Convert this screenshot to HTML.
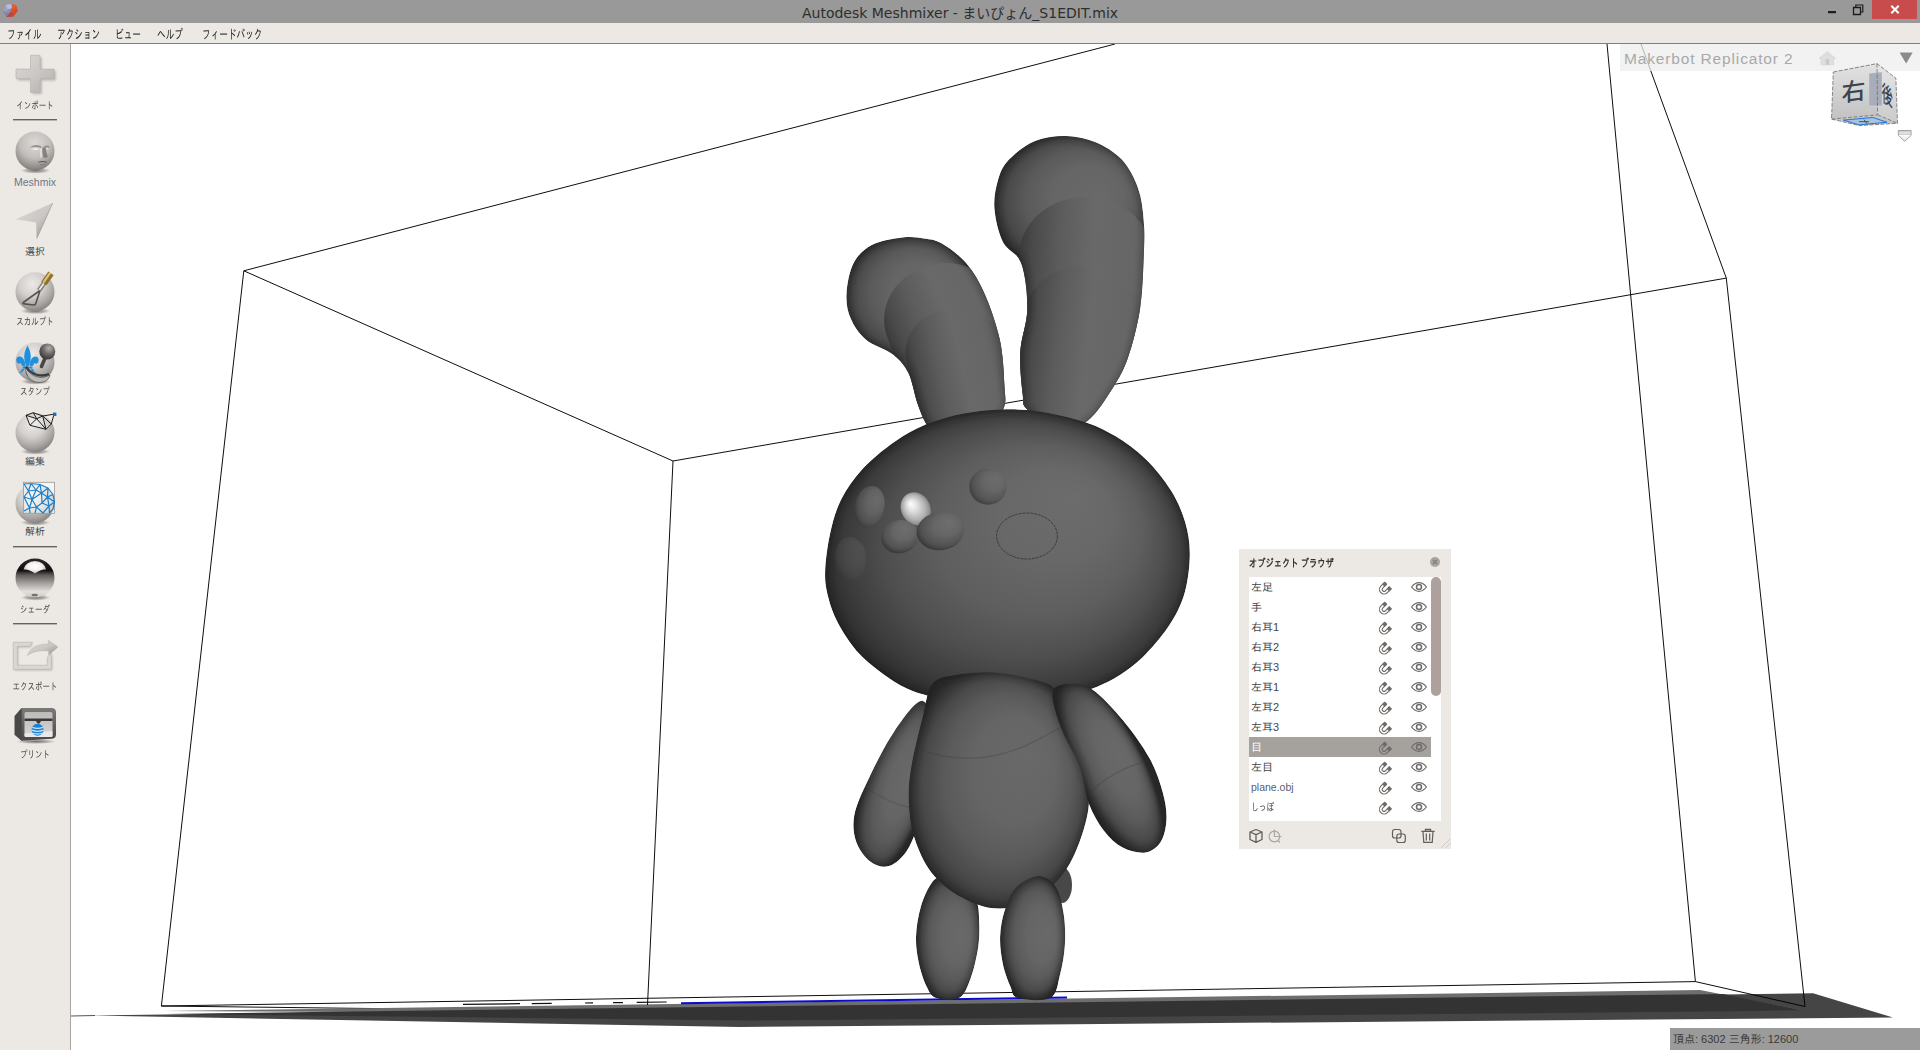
<!DOCTYPE html>
<html lang="ja"><head><meta charset="utf-8"><title>Autodesk Meshmixer</title>
<style>
*{box-sizing:border-box;margin:0;padding:0}
html,body{width:1920px;height:1050px;overflow:hidden;background:#fff;font-family:"Liberation Sans","IPAGothic","Noto Sans CJK JP",sans-serif}
#titlebar{position:absolute;left:0;top:0;width:1920px;height:23px;background:#999999}
#title{position:absolute;left:0;top:1px;width:1920px;height:23px;line-height:24px;text-align:center;font-size:14px;color:#2e2e2e;font-family:"DejaVu Sans","Liberation Sans","Noto Sans CJK JP",sans-serif;letter-spacing:0px}
#menubar{position:absolute;left:0;top:23px;width:1920px;height:21px;background:#ece8e4;border-bottom:1px solid #7f7f7f}
.mi{position:absolute;top:5px;font-size:13px;line-height:14px;color:#222;white-space:nowrap;transform-origin:0 0;transform:scaleX(.665);font-family:"Liberation Sans","IPAGothic","Noto Sans CJK JP",sans-serif}
#sidebar{position:absolute;left:0;top:44px;width:71px;height:1006px;background:#ece8e4;border-right:1px solid #a8a5a2}
.sl{position:absolute;left:0;width:70px;text-align:center;font-size:10px;line-height:12px;color:#444;white-space:nowrap;font-family:"Liberation Sans","IPAGothic","Noto Sans CJK JP",sans-serif}
.sl span{display:inline-block;transform:scaleX(.75);transform-origin:50% 50%}
.sl span.k{transform:none}
.sl.en{font-family:"Liberation Sans",sans-serif;font-size:10.5px;color:#6d7784}
.sep{position:absolute;left:13px;width:44px;height:1px;background:#65625f;box-shadow:0 1px 0 rgba(101,98,95,.4)}
#scene{position:absolute;left:0;top:0;width:1920px;height:1050px}
#status{position:absolute;left:1670px;top:1028px;width:250px;height:22px;background:#9b9b9b;color:#3a3a3a;font-size:11px;line-height:22px;padding-left:3px;font-family:"Liberation Sans","IPAGothic",sans-serif}
#printer{position:absolute;left:1620px;top:44px;width:300px;height:27px;background:rgba(238,238,238,.75)}
#printer span{position:absolute;left:4px;top:5px;font-size:15.5px;line-height:20px;color:#a9a9a9;letter-spacing:.85px;white-space:nowrap}
#ob{position:absolute;left:1239px;top:549px;width:212px;height:300px;background:#ece8e4}
#ob h4{position:absolute;left:10px;top:7px;font-size:11px;line-height:14px;font-weight:bold;color:#333;white-space:nowrap;transform:scaleX(.75);transform-origin:0 0;font-family:"Liberation Sans","IPAGothic","Noto Sans CJK JP",sans-serif}
#list{position:absolute;left:10px;top:28px;width:192px;height:244px;background:#fff}
.row{position:absolute;left:0;width:182px;height:20px;font-size:11px;line-height:20px;color:#444;padding-left:2px;white-space:nowrap;font-family:"Liberation Sans","IPAGothic","Noto Sans CJK JP",sans-serif}
.row.sel{background:#a5a19d;color:#fff}
.row.en{font-family:"Liberation Sans",sans-serif;font-size:10.5px;color:#596070}
#sb{position:absolute;left:192px;top:28px;width:10px;height:119px;background:#ada09d;border-radius:5px}
.rim{fill:none;stroke:#151515;stroke-width:6;filter:url(#b3);opacity:.4}
.shadow{fill:none;stroke:#2a2a2a;stroke-width:6;filter:url(#b3);opacity:.5}
.seam{fill:none;stroke:#3c3c3c;stroke-width:1.5;opacity:.28}
</style></head><body>
<div id="titlebar"></div>
<div id="title">Autodesk Meshmixer - まいぴょん_S1EDIT.mix</div>
<svg id="wctl" width="100" height="23" viewBox="1820 0 100 23" style="position:absolute;left:1820px;top:0">
<rect x="1872" y="0" width="45" height="19" fill="#c94c4c"/>
<path d="M1891.300 5.800l7.400 7.400M1898.700 5.800l-7.400 7.400" stroke="#fff" stroke-width="2"/>
<rect x="1828" y="11" width="8" height="2.200" fill="#1c1c1c"/>
<path d="M1853.500 7.500h7v7h-7z" fill="none" stroke="#1c1c1c" stroke-width="1.300"/>
<path d="M1855.800 7.500v-2.500h7v7h-2.300" fill="none" stroke="#1c1c1c" stroke-width="1.200"/>
</svg>
<svg width="22" height="22" viewBox="0 0 22 22" style="position:absolute;left:0;top:0">
<path d="M11 3.800L16.500 6L17.800 10.500L13.500 16.600L6.500 16.900L2.800 10.500L5.500 5Z" fill="#8a90b4"/>
<path d="M11 3.800L5.500 5L7.500 9.500L12 8Z" fill="#b9bdd6"/><path d="M5.500 5L2.800 10.500L7 12.500L7.500 9.500Z" fill="#9aa0c2"/><path d="M2.800 10.500L6.500 16.900L9.500 13.500L7 12.500Z" fill="#7f84a6"/>
<path d="M12.800 3.900L16.500 6L17.800 10.500L13.500 16.600L6.500 16.900L10.500 12L12 8Z" fill="#d9532f"/>
<path d="M12.800 3.900L16.500 6L14.500 9.500L12 8Z" fill="#ee5a25"/><path d="M6.500 16.900L13.500 16.600L12.500 12.500L10.500 12Z" fill="#b64a3f"/><path d="M17.800 10.500L13.500 16.600L12.500 12.500L14.500 9.500Z" fill="#cf4c30"/>
</svg>
<div id="menubar">
<div class="mi" style="left:7px">ファイル</div>
<div class="mi" style="left:57px">アクション</div>
<div class="mi" style="left:115px">ビュー</div>
<div class="mi" style="left:157px">ヘルプ</div>
<div class="mi" style="left:202px">フィードバック</div>
</div>
<div id="sidebar">
<svg width="70" height="1006" viewBox="0 44 70 1006" style="position:absolute;left:0;top:0">
<defs>
<linearGradient id="gPlus" x1="0" y1="0" x2="1" y2="1"><stop offset="0" stop-color="#d9d7d4"/><stop offset=".5" stop-color="#cbc8c5"/><stop offset="1" stop-color="#b0adaa"/></linearGradient>
<radialGradient id="gSph" cx=".42" cy=".3" r=".72"><stop offset="0" stop-color="#eceae8"/><stop offset=".45" stop-color="#d2cfcc"/><stop offset=".8" stop-color="#a6a3a0"/><stop offset="1" stop-color="#84817e"/></radialGradient>
<radialGradient id="gFace" cx=".5" cy=".3" r=".75"><stop offset="0" stop-color="#dcdad8"/><stop offset=".5" stop-color="#c2bfbc"/><stop offset=".85" stop-color="#8d8a87"/><stop offset="1" stop-color="#6f6c69"/></radialGradient>
<radialGradient id="gShd" cx=".5" cy=".5" r=".5"><stop offset="0" stop-color="#4a4744" stop-opacity=".75"/><stop offset=".6" stop-color="#6a6764" stop-opacity=".45"/><stop offset="1" stop-color="#8a8784" stop-opacity="0"/></radialGradient>
<linearGradient id="gArrow" x1="0" y1="0" x2="1" y2="1"><stop offset="0" stop-color="#dddbd8"/><stop offset=".55" stop-color="#c9c6c3"/><stop offset="1" stop-color="#8f8c89"/></linearGradient>
<linearGradient id="gChrome" x1="0" y1="0" x2="0" y2="1"><stop offset="0" stop-color="#2a2827"/><stop offset=".3" stop-color="#0e0d0d"/><stop offset=".42" stop-color="#5d5a58"/><stop offset=".62" stop-color="#a09c9a"/><stop offset=".85" stop-color="#e4dfdd"/><stop offset="1" stop-color="#cfcac8"/></linearGradient>
<radialGradient id="gChromeHi" cx=".5" cy=".45" r=".55"><stop offset="0" stop-color="#fff"/><stop offset=".6" stop-color="#f4eeee"/><stop offset="1" stop-color="#b5aeae"/></radialGradient>
<radialGradient id="gBall" cx=".6" cy=".3" r=".7"><stop offset="0" stop-color="#b5b3b1"/><stop offset=".5" stop-color="#6e6c6a"/><stop offset="1" stop-color="#3c3a39"/></radialGradient>
<linearGradient id="gPrn" x1="0" y1="0" x2="0" y2="1"><stop offset="0" stop-color="#7b7977"/><stop offset="1" stop-color="#4b4948"/></linearGradient>
<linearGradient id="gPrnIn" x1="0" y1="0" x2="0" y2="1"><stop offset="0" stop-color="#bdbbb9"/><stop offset="1" stop-color="#d9d7d5"/></linearGradient>
<filter id="sb1" x="-20%" y="-20%" width="150%" height="150%"><feGaussianBlur stdDeviation="1"/></filter>
</defs>
<!-- import plus -->
<path d="M31.5 56.5h9.5v13.5h14v9.6h-14v13.5h-9.5v-13.5h-14.5v-9.6h14.5z" fill="#8f8c89" opacity=".55" filter="url(#sb1)" transform="translate(.8 1)"/>
<path d="M30.5 55.3h9.5v13.8h14.2v9.6h-14.2v13.7h-9.5v-13.7h-14.5v-9.6h14.500z" fill="url(#gPlus)" stroke="#b7b4b1" stroke-width=".7"/>
<!-- meshmix -->
<ellipse cx="35.5" cy="170.5" rx="15" ry="3.2" fill="url(#gShd)"/>
<circle cx="35" cy="151" r="19.5" fill="url(#gFace)"/>
<path d="M29.500 147.500q5.500-4.500 11.500-1.200l.8 1.800q-6-2-12.300-.6z" fill="#7d7a77" opacity=".75"/>
<path d="M44.200 146.300q2.800-1.600 5.300.2l-.3 1.300q-2.500-1-5 0z" fill="#7d7a77" opacity=".75"/>
<path d="M31.500 149q4.500-1.800 8.500-.3q-4 2.300-8.500.3zM45 148.700q2-1 4 0q-2 1.500-4 0z" fill="#eeecea"/>
<path d="M42.300 147.500q-.3 5 1 9.800q2.300 1.300 4.500-.6q-1.800-4.500-2-9.200z" fill="#6a6764" opacity=".7"/>
<path d="M41.300 148q-.8 5.500-.3 9.500" stroke="#f0eeec" stroke-width="1.300" fill="none" opacity=".9"/>
<path d="M38.500 162.200q4-1.300 8.200.1" stroke="#5e5b58" stroke-width="1.100" fill="none"/>
<path d="M40 164.500q2.600 1 5.400.1" stroke="#7d7a77" stroke-width="1" fill="none"/>
<!-- select arrow -->
<path d="M52.700 203L15.700 219.300L36 222.500L36.700 238.700Z" fill="url(#gArrow)"/>
<path d="M52.700 203L36.700 238.700" stroke="#8a8784" stroke-width=".8" opacity=".7"/>
<!-- sculpt -->
<ellipse cx="35.500" cy="311" rx="15" ry="3.200" fill="url(#gShd)"/>
<circle cx="35" cy="291.700" r="19.500" fill="url(#gSph)"/>
<path d="M40 290.500L23.200 302.500q-.8 1.200 1 1.400L33.500 305q1.800 0 2.200-1.300z" fill="none" stroke="#55524f" stroke-width="1.600" stroke-linejoin="round"/>
<path d="M39 290.300L44.500 282.500" stroke="#7d7a77" stroke-width="4.600"/>
<path d="M39.300 289.800L44.500 282.500" stroke="#ecebea" stroke-width="1.800"/>
<path d="M43.800 283.500L51 273.300" stroke="#8f7226" stroke-width="6.500"/>
<path d="M43.300 282.600L50.300 272.600" stroke="#d9c27e" stroke-width="2.200"/>
<!-- stamp -->
<ellipse cx="35.500" cy="381.500" rx="15" ry="3.200" fill="url(#gShd)"/>
<circle cx="35" cy="362" r="19.500" fill="url(#gSph)"/>
<g fill="#1f8fe0"><path d="M27.500 345.500C30 350 31.500 355 30.500 360C30 363 29 365 28.500 366.500L26.500 366.500C26 365 25 363 24.500 360C23.500 355 25 350 27.500 345.500Z"/>
<path d="M25.500 366.500C25.500 361 23 356.500 19.500 356.500C16.500 356.500 15.500 360 17 362.500C18 364 20 364 20.800 362.800C21 365 22.500 366.500 24 366.500Z"/>
<path d="M29.500 366.500C29.500 361 32 356.500 35.500 356.500C38.500 356.500 39.500 360 38 362.500C37 364 35 364 34.200 362.800C34 365 32.500 366.500 31 366.500Z"/>
<rect x="22.500" y="366.800" width="10" height="1.800"/>
<path d="M27.500 369l2 5l-2 1.800l-2-1.800zM24.300 369c-1 3-3 4.500-5.800 4c1.800-.5 2.800-2 3.300-4zM30.700 369c1 3 3 4.500 5.800 4c-1.800-.5-2.800-2-3.300-4z"/></g>
<path d="M25 367c6 10 16 13 25 8c-1 4.500-5 7.500-11 7.500c-7 0-13-5-14-15.500z" fill="#bdbbb9" stroke="#5a5856" stroke-width=".8"/>
<path d="M26 366.500c5 8 14 11 23 7.500" fill="none" stroke="#3d3b3a" stroke-width="2.200"/>
<path d="M45.500 357L41.500 366.500" stroke="#4a4847" stroke-width="3.600" stroke-linecap="round"/>
<circle cx="47.300" cy="351.500" r="8" fill="url(#gBall)"/>
<!-- edit -->
<ellipse cx="35.500" cy="451.500" rx="15" ry="3.200" fill="url(#gShd)"/>
<circle cx="35" cy="432.500" r="19.500" fill="url(#gSph)"/>
<path d="M26 415.300L33.300 412.700L42.700 416L54 414.200L51.300 424L46 429.300L30 425.300ZM26 415.300L36.700 418.700L33.300 412.700M36.700 418.700L42.700 416L51.300 424M36.700 418.700L30 425.300M36.700 418.700L46 429.300M42.700 416L46 429.300" fill="rgba(255,255,255,.25)" stroke="#1d1c1b" stroke-width="1" stroke-linejoin="round"/>
<rect x="53" y="412.600" width="3.400" height="3.400" fill="#1473c8"/>
<!-- analysis -->
<ellipse cx="35.500" cy="522.500" rx="15" ry="3.200" fill="url(#gShd)"/>
<circle cx="35" cy="503.500" r="19.500" fill="url(#gSph)"/>
<rect x="23.500" y="482.300" width="31" height="31" fill="rgba(255,255,255,.55)" stroke="#9a9794" stroke-width=".8"/>
<path d="M24 484L31 483.500L40 484.500L48 488L53 494.500L54.500 502L53 509L49.500 513M24 484L28.500 491L31 483.500L36 490L40 484.500L41.500 493L48 488L47.500 497L53 494.500M24 497L28.500 491L36 490L41.500 493L47.500 497L54.500 502M24 497L32 499.500L28.500 491M32 499.500L36 490M32 499.500L41.500 493L42 503L47.500 497L49 506L54.500 502M24 511L29.500 508L32 499.500L36.500 507L42 503L49 506L49.500 513M24 497L29.500 508L36.500 507L43 513L49 506M36.500 507L35 513M29.500 508L30 513" fill="none" stroke="#1b7fca" stroke-width="1.200" stroke-linejoin="round"/>
<!-- shader -->
<ellipse cx="35.500" cy="597.500" rx="15" ry="3.200" fill="url(#gShd)"/>
<circle cx="35" cy="578" r="19.500" fill="url(#gChrome)"/>
<path d="M23.500 569.500q2-8 11.500-8.500q9.500.5 11 8.500q-5-.5-11 4q-6-4.500-11.500-4z" fill="url(#gChromeHi)"/>
<ellipse cx="34.700" cy="595" rx="3.200" ry="1.300" fill="#5c5856" opacity=".8"/>
<!-- export -->
<g transform="translate(.8 1)" opacity=".5" filter="url(#sb1)"><path d="M13.300 642.300h19l-3 4h-12v19h30v-8l4-4v16h-38z" fill="#7c7976"/></g>
<path d="M13.300 642.300h19l-3 4h-12v19h30v-8l4-4v16h-38z" fill="#d9d7d4" stroke="#bcb9b6" stroke-width=".6"/>
<path d="M27.300 655.500c3-8 10-11.500 21-11.500v-3.700l9.700 6.700l-9.300 8.300v-4.300c-9-1-16 .5-21.400 4.500z" fill="url(#gArrow)" stroke="#b5b2af" stroke-width=".5"/>
<!-- print -->
<ellipse cx="36" cy="741.500" rx="20" ry="2.500" fill="url(#gShd)"/>
<path d="M14.700 716l7-8h30.500q3.800.3 3.800 4.500v22q0 4-3.800 4.200l-30.500 2l-7-6z" fill="url(#gPrn)"/>
<path d="M14.700 716l7-8v32.700l-7-6z" fill="#4a4847"/>
<rect x="24.500" y="712" width="28" height="25" rx="1.500" fill="url(#gPrnIn)"/>
<rect x="24.500" y="718.500" width="28" height="2.500" fill="#3a3938"/>
<path d="M36 721h5l-1.500 2.500h-2z" fill="#3a3938"/>
<path d="M24.500 733.500l28-2.500v4.500q0 1.500-1.500 1.500h-25q-1.500 0-1.500-1.500z" fill="#f0eeec" opacity=".8"/>
<circle cx="37.600" cy="729.800" r="6" fill="#1b7fd2"/>
<path d="M32.300 727.300q5.300 2.200 10.600 0M31.700 730.200q6 2.300 11.800 0M32.600 733q5 2 10 0" fill="none" stroke="#bfe2fa" stroke-width="1.300"/>
</svg>
<div class="sep" style="top:75px"></div>
<div class="sep" style="top:502px"></div>
<div class="sep" style="top:579px"></div>
<div class="sl" style="top:56px"><span>インポート</span></div>
<div class="sl en" style="top:132px">Meshmix</div>
<div class="sl" style="top:202px"><span class="k">選択</span></div>
<div class="sl" style="top:272px"><span>スカルプト</span></div>
<div class="sl" style="top:342px"><span>スタンプ</span></div>
<div class="sl" style="top:412px"><span class="k">編集</span></div>
<div class="sl" style="top:482px"><span class="k">解析</span></div>
<div class="sl" style="top:560px"><span>シェーダ</span></div>
<div class="sl" style="top:637px"><span>エクスポート</span></div>
<div class="sl" style="top:705px"><span>プリント</span></div>
</div>
<svg id="scene" viewBox="0 0 1920 1050">
<defs>
<clipPath id="vp"><rect x="71" y="44" width="1849" height="1006"/></clipPath>
<filter id="b5" x="-20%" y="-20%" width="140%" height="140%"><feGaussianBlur stdDeviation="6.5"/></filter>
<filter id="b10" x="-20%" y="-20%" width="140%" height="140%"><feGaussianBlur stdDeviation="11"/></filter>
<filter id="b4" x="-20%" y="-20%" width="140%" height="140%"><feGaussianBlur stdDeviation="5"/></filter>
<filter id="b3" x="-20%" y="-20%" width="140%" height="140%"><feGaussianBlur stdDeviation="3"/></filter>
<path id="pEarR" d="M1065.4 135.9C1075.4 136.1 1085.6 138.1 1095.0 142.0C1104.4 145.9 1114.6 151.9 1121.8 159.6C1129.0 167.3 1134.3 177.8 1138.0 188.0C1141.7 198.2 1142.8 209.1 1143.7 220.6C1144.7 232.1 1144.3 242.5 1143.7 257.2C1143.1 271.9 1142.6 292.2 1140.0 309.0C1137.4 325.8 1132.5 344.6 1127.9 357.8C1123.3 371.0 1119.2 377.8 1112.6 388.2C1106.0 398.6 1097.0 412.9 1088.2 420.2C1079.4 427.5 1070.2 433.8 1060.0 432.0C1049.8 430.2 1033.5 415.9 1027.3 409.6C1021.1 403.3 1023.9 404.0 1022.7 394.3C1021.5 384.6 1019.5 365.9 1020.3 351.7C1021.1 337.5 1027.1 323.7 1027.3 309.0C1027.5 294.3 1025.3 274.5 1021.2 263.3C1017.1 252.1 1007.4 251.1 1002.9 241.9C998.4 232.8 995.2 218.7 994.4 208.4C993.6 198.1 995.6 188.1 998.0 180.0C1000.4 171.9 1002.8 166.1 1009.0 159.6C1015.2 153.1 1025.6 144.9 1035.0 141.0C1044.4 137.1 1055.4 135.7 1065.4 135.9Z"/><path id="pEarL" d="M902.3 237.4C911.0 236.3 917.4 237.5 924.0 238.5C930.6 239.5 934.9 239.4 941.9 243.5C948.9 247.6 959.2 254.9 966.3 263.3C973.4 271.7 979.0 281.0 984.6 293.7C990.2 306.4 996.5 324.2 999.8 339.5C1003.1 354.8 1003.9 373.4 1004.4 385.2C1004.9 396.9 1007.0 400.9 1002.9 410.0C998.8 419.1 990.5 435.0 980.0 440.0C969.5 445.0 948.9 442.5 940.0 440.0C931.1 437.5 930.5 430.9 926.7 424.8C923.0 418.7 920.5 412.1 917.5 403.5C914.5 394.9 912.4 381.1 908.4 373.0C904.4 364.9 900.3 360.3 893.2 354.7C886.1 349.1 872.8 345.6 865.7 339.5C858.6 333.4 853.7 325.7 850.5 318.1C847.3 310.5 846.0 302.8 846.5 293.7C847.0 284.6 849.3 271.4 853.5 263.3C857.7 255.2 863.7 249.3 871.8 245.0C879.9 240.7 893.6 238.5 902.3 237.4Z"/><path id="pHead" d="M825.1 572.3C825.4 561.8 827.3 546.6 829.9 534.6C832.5 522.6 835.4 511.0 840.9 500.0C846.4 489.0 854.0 478.3 862.9 468.6C871.8 458.9 883.8 449.2 894.3 441.9C904.8 434.6 914.2 429.3 925.7 424.6C937.2 419.9 950.9 416.1 963.5 413.6C976.1 411.1 988.6 409.9 1001.2 409.5C1013.8 409.1 1025.3 409.4 1038.9 411.4C1052.5 413.4 1070.3 417.4 1082.9 421.4C1095.5 425.4 1103.9 429.3 1114.4 435.6C1124.9 441.9 1136.4 450.0 1145.8 459.2C1155.2 468.4 1164.5 480.1 1171.0 490.6C1177.5 501.1 1182.0 511.5 1185.1 522.0C1188.2 532.5 1189.8 542.0 1189.8 553.5C1189.8 565.0 1188.2 579.7 1185.1 591.2C1182.0 602.7 1177.5 612.1 1171.0 622.6C1164.5 633.1 1154.2 645.5 1145.8 654.1C1137.4 662.8 1129.6 668.8 1120.7 674.5C1111.8 680.2 1104.2 684.0 1092.4 688.6C1080.6 693.2 1064.6 698.8 1050.0 702.0C1035.4 705.2 1019.2 707.5 1005.0 708.0C990.8 708.5 977.4 706.9 965.0 705.0C952.6 703.1 940.2 699.2 930.5 696.5C920.8 693.8 915.0 692.5 906.9 688.6C898.8 684.7 890.1 679.2 881.7 672.9C873.3 666.6 863.9 659.3 856.6 650.9C849.3 642.5 842.4 631.5 837.7 622.6C833.0 613.7 830.4 605.9 828.3 597.5C826.2 589.1 824.8 582.8 825.1 572.3Z"/><path id="pBody" d="M932.3 683.8C937.7 676.9 945.0 676.9 955.2 675.0C965.4 673.1 981.2 671.9 993.3 672.4C1005.3 672.9 1017.5 675.6 1027.5 678.1C1037.5 680.6 1048.6 682.5 1053.4 687.6C1058.2 692.7 1054.1 700.6 1056.1 708.5C1058.1 716.4 1061.5 725.7 1065.6 735.2C1069.7 744.7 1077.0 756.2 1080.8 765.7C1084.6 775.2 1087.5 783.4 1088.5 792.3C1089.5 801.2 1089.0 808.2 1086.5 819.0C1084.0 829.8 1078.6 846.3 1073.2 857.1C1067.8 867.9 1062.5 876.1 1054.2 883.7C1046.0 891.3 1032.6 898.7 1023.7 902.8C1014.8 906.9 1008.5 908.2 1000.9 908.5C993.3 908.8 986.2 907.6 978.0 904.7C969.8 901.8 959.6 897.3 951.4 891.3C943.1 885.3 934.9 878.0 928.5 868.5C922.1 859.0 916.6 845.6 913.3 834.2C910.0 822.8 909.0 811.3 908.7 799.9C908.4 788.5 909.0 779.7 911.4 765.7C913.8 751.8 919.3 729.9 922.8 716.2C926.3 702.6 926.9 690.7 932.3 683.8Z"/>
<path id="pArmL" d="M922.8 700.9C916.0 699.5 903.4 718.1 894.2 731.4C885.0 744.7 874.2 766.9 867.6 780.9C861.0 794.9 856.2 805.1 854.3 815.2C852.4 825.4 853.7 834.2 856.2 841.8C858.7 849.4 864.4 856.8 869.5 860.9C874.6 865.0 881.2 867.2 886.6 866.6C892.0 866.0 897.5 861.9 901.9 857.1C906.3 852.3 909.4 847.5 913.3 838.0C917.1 828.5 921.4 816.3 925.0 800.0C928.6 783.7 935.4 756.5 935.0 740.0C934.6 723.5 929.6 702.3 922.8 700.9Z"/><path id="pArmR" d="M1053.5 689.5C1056.0 685.4 1062.9 683.8 1069.4 683.8C1075.9 683.8 1083.4 683.5 1092.3 689.5C1101.2 695.5 1113.2 708.6 1122.7 720.0C1132.2 731.4 1142.7 746.0 1149.4 758.0C1156.1 770.0 1159.9 782.1 1162.7 792.3C1165.5 802.5 1166.8 810.8 1166.5 819.0C1166.2 827.2 1164.3 836.2 1160.8 841.8C1157.3 847.4 1151.9 851.5 1145.6 852.5C1139.2 853.5 1129.7 851.2 1122.7 847.5C1115.7 843.8 1109.3 837.7 1103.7 830.4C1098.1 823.1 1093.0 814.6 1088.9 803.8C1084.8 793.0 1083.4 777.1 1079.3 765.7C1075.2 754.3 1068.2 744.7 1064.1 735.2C1060.0 725.7 1056.4 716.1 1054.6 708.5C1052.8 700.9 1051.0 693.6 1053.5 689.5Z"/><path id="pLegL" d="M945.0 876.0C940.0 876.3 936.3 876.9 932.3 882.0C928.3 887.1 923.6 897.4 920.9 906.6C918.2 915.8 916.3 927.5 916.0 937.0C915.7 946.5 917.2 955.5 919.0 963.7C920.8 972.0 923.8 980.8 926.6 986.5C929.5 992.2 930.7 996.1 936.1 998.0C941.5 999.9 953.3 1001.2 959.0 998.0C964.7 994.8 967.2 987.1 970.4 978.9C973.6 970.6 976.5 958.0 978.0 948.5C979.5 939.0 979.5 929.9 979.2 921.8C978.9 913.7 979.0 907.0 976.1 900.0C973.2 893.0 967.2 884.0 962.0 880.0C956.8 876.0 950.0 875.7 945.0 876.0Z"/><path id="pLegR" d="M1039.0 876.1C1032.3 876.1 1021.8 881.8 1016.1 887.5C1010.4 893.2 1007.4 902.1 1004.7 910.4C1002.0 918.6 1000.4 928.1 1000.1 937.0C999.8 945.9 1001.1 955.5 1002.8 963.7C1004.5 972.0 1007.9 980.8 1010.4 986.5C1012.9 992.2 1011.3 996.1 1018.0 998.0C1024.7 999.9 1043.4 1001.8 1050.4 998.0C1057.4 994.2 1057.5 984.0 1059.9 975.1C1062.3 966.2 1064.3 954.9 1064.9 944.7C1065.5 934.6 1065.2 923.7 1063.7 914.2C1062.2 904.7 1060.2 893.9 1056.1 887.5C1052.0 881.1 1045.7 876.1 1039.0 876.1Z"/>
<clipPath id="cEarR"><use href="#pEarR"/></clipPath><clipPath id="cEarL"><use href="#pEarL"/></clipPath><clipPath id="cHead"><use href="#pHead"/></clipPath><clipPath id="cBody"><use href="#pBody"/></clipPath>
<clipPath id="cArmL"><use href="#pArmL"/></clipPath><clipPath id="cArmR"><use href="#pArmR"/></clipPath><clipPath id="cLegL"><use href="#pLegL"/></clipPath><clipPath id="cLegR"><use href="#pLegR"/></clipPath>
<radialGradient id="lHead" gradientUnits="userSpaceOnUse" gradientTransform="translate(1007 559) rotate(0) scale(183 150)" cx="0" cy="0" r="1.03" fx="0.38" fy="-0.42"><stop offset="0" stop-color="#6c6c6c"/><stop offset=".3" stop-color="#686868"/><stop offset=".55" stop-color="#5e5e5e"/><stop offset=".75" stop-color="#4e4e4e"/><stop offset=".9" stop-color="#3b3b3b"/><stop offset="1" stop-color="#282828"/></radialGradient>
<radialGradient id="lBody" gradientUnits="userSpaceOnUse" gradientTransform="translate(998 790) rotate(0) scale(91 119)" cx="0" cy="0" r="1.08" fx="0.32" fy="-0.3"><stop offset="0" stop-color="#696969"/><stop offset=".42" stop-color="#656565"/><stop offset=".65" stop-color="#5a5a5a"/><stop offset=".82" stop-color="#494949"/><stop offset=".95" stop-color="#303030"/><stop offset="1" stop-color="#2a2a2a"/></radialGradient>
<radialGradient id="lEarR" gradientUnits="userSpaceOnUse" gradientTransform="translate(1072 203) rotate(0) scale(80 70)" cx="0" cy="0" r="1.08" fx="0.35" fy="-0.15"><stop offset="0" stop-color="#696969"/><stop offset=".42" stop-color="#656565"/><stop offset=".65" stop-color="#5a5a5a"/><stop offset=".82" stop-color="#494949"/><stop offset=".95" stop-color="#303030"/><stop offset="1" stop-color="#2a2a2a"/></radialGradient>
<radialGradient id="lEarL" gradientUnits="userSpaceOnUse" gradientTransform="translate(908 297) rotate(0) scale(66 62)" cx="0" cy="0" r="1.08" fx="0.35" fy="-0.2"><stop offset="0" stop-color="#696969"/><stop offset=".42" stop-color="#656565"/><stop offset=".65" stop-color="#5a5a5a"/><stop offset=".82" stop-color="#494949"/><stop offset=".95" stop-color="#303030"/><stop offset="1" stop-color="#2a2a2a"/></radialGradient>
<radialGradient id="lArmL" gradientUnits="userSpaceOnUse" gradientTransform="translate(896 783) rotate(17) scale(31 90)" cx="0" cy="0" r="1.08" fx="0.4" fy="-0.1"><stop offset="0" stop-color="#696969"/><stop offset=".42" stop-color="#656565"/><stop offset=".65" stop-color="#5a5a5a"/><stop offset=".82" stop-color="#494949"/><stop offset=".95" stop-color="#303030"/><stop offset="1" stop-color="#2a2a2a"/></radialGradient>
<radialGradient id="lArmR" gradientUnits="userSpaceOnUse" gradientTransform="translate(1110 768) rotate(-26) scale(32 93)" cx="0" cy="0" r="1.08" fx="0.5" fy="-0.1"><stop offset="0" stop-color="#696969"/><stop offset=".42" stop-color="#656565"/><stop offset=".65" stop-color="#5a5a5a"/><stop offset=".82" stop-color="#494949"/><stop offset=".95" stop-color="#303030"/><stop offset="1" stop-color="#2a2a2a"/></radialGradient>
<radialGradient id="lLegL" gradientUnits="userSpaceOnUse" gradientTransform="translate(948 938) rotate(0) scale(32.5 62)" cx="0" cy="0" r="1.08" fx="0.45" fy="-0.05"><stop offset="0" stop-color="#696969"/><stop offset=".42" stop-color="#656565"/><stop offset=".65" stop-color="#5a5a5a"/><stop offset=".82" stop-color="#494949"/><stop offset=".95" stop-color="#303030"/><stop offset="1" stop-color="#2a2a2a"/></radialGradient>
<radialGradient id="lLegR" gradientUnits="userSpaceOnUse" gradientTransform="translate(1033 937) rotate(0) scale(33 62)" cx="0" cy="0" r="1.08" fx="0.45" fy="-0.05"><stop offset="0" stop-color="#696969"/><stop offset=".42" stop-color="#656565"/><stop offset=".65" stop-color="#5a5a5a"/><stop offset=".82" stop-color="#494949"/><stop offset=".95" stop-color="#303030"/><stop offset="1" stop-color="#2a2a2a"/></radialGradient>
<linearGradient id="gSeg" x1="0" y1="0" x2="1" y2="0"><stop offset="0" stop-color="#3a3a3a"/><stop offset=".1" stop-color="#4a4a4a"/><stop offset=".3" stop-color="#5c5c5c"/><stop offset=".55" stop-color="#696969"/><stop offset=".85" stop-color="#666"/><stop offset="1" stop-color="#5c5c5c"/></linearGradient>
<radialGradient id="gSpot" cx=".58" cy=".42" r=".62" fx=".72" fy=".28"><stop offset="0" stop-color="#6e6e6e"/><stop offset=".45" stop-color="#666"/><stop offset=".8" stop-color="#525252"/><stop offset="1" stop-color="#363636"/></radialGradient>
<radialGradient id="gEye" cx=".5" cy=".5" r=".55" fx=".42" fy=".3"><stop offset="0" stop-color="#ffffff"/><stop offset=".3" stop-color="#e2e2e2"/><stop offset=".7" stop-color="#b0b0b0"/><stop offset="1" stop-color="#787878"/></radialGradient>
</defs>
<g clip-path="url(#vp)">
<line x1="161.4" y1="1006" x2="647.2" y2="1011.8" stroke="#000" stroke-width=".95"/>
<!-- floor -->
<polygon points="90,1015.5 740,1027 1893,1017.5 1813,993.3" fill="#454545"/>
<polygon points="163,1011 1700,990 1803,1010.3 750,1014" fill="#6e6e6e"/>
<polygon points="166,1014 750,1020.5 1803,1010.5 1723,994" fill="#333333"/>
<line x1="71" y1="1016" x2="95" y2="1015.5" stroke="#555" stroke-width="1"/>
<!-- box wireframe -->
<g stroke="#000" stroke-width=".95" fill="none">
<path d="M243.8 270.8L1115 44M243.8 270.8L673 461L1726.3 278.1L1641 44M243.8 270.8L161.4 1006L1695.4 981.6L1805 1006.5L1726.3 278.1M673 461L647.5 1005M1607 44L1695.4 981.6"/>
</g>
<path d="M463 1004.4L520 1003.700M531.700 1003.600L551.700 1003.400M585 1003L593 1002.900M613 1002.700L623 1002.600M636.700 1002.400L666.700 1002" stroke="#111" stroke-width="1.2"/>
<line x1="681" y1="1003.2" x2="1067" y2="997.5" stroke="#0a0acc" stroke-width="2"/>
<!-- bunny -->
<ellipse cx="1062" cy="885" rx="10" ry="18" fill="#484848"/>
<g clip-path="url(#cArmL)"><use href="#pArmL" fill="url(#lArmL)"/><path d="M867.6 788.5Q888 803 909.5 807.5" class="seam"/><use href="#pArmL" class="rim" transform="translate(1.5 .5)"/></g>
<g clip-path="url(#cEarL)"><use href="#pEarL" fill="url(#lEarL)"/>
<rect x="884" y="267" width="116" height="220" rx="54" ry="52" transform="rotate(-22 936 319)" fill="url(#gSeg)"/>
<rect x="905" y="310" width="96" height="200" rx="44" ry="40" transform="rotate(-13 950 349)" fill="url(#gSeg)"/>
<use href="#pEarL" class="rim" transform="translate(1.5 .5)"/></g>
<g clip-path="url(#cEarR)"><use href="#pEarR" fill="url(#lEarR)"/>
<rect x="1019" y="197" width="134" height="260" rx="67" ry="60" transform="rotate(2 1085 257)" fill="url(#gSeg)"/>
<rect x="1022" y="266" width="122" height="220" rx="58" ry="60" transform="rotate(6 1079 326)" fill="url(#gSeg)"/>
<use href="#pEarR" class="rim" transform="translate(1.5 .5)"/></g>
<g clip-path="url(#cHead)"><use href="#pHead" fill="url(#lHead)"/>
<ellipse cx="850.3" cy="559" rx="16" ry="22" transform="rotate(-3 850.3 559)" fill="url(#gSpot)" opacity=".3"/>
<ellipse cx="869.3" cy="506.7" rx="15" ry="21" transform="rotate(14 869.3 506.7)" fill="url(#gSpot)" opacity=".9"/>
<ellipse cx="988" cy="486.7" rx="18.700" ry="18" fill="url(#gSpot)" opacity=".85"/>
<ellipse cx="915.7" cy="508.7" rx="14.500" ry="17" transform="rotate(-28 915.7 508.7)" fill="url(#gEye)"/>
<ellipse cx="899.7" cy="536.7" rx="18.700" ry="16.500" transform="rotate(-15 899.7 536.7)" fill="url(#gSpot)"/>
<ellipse cx="940.3" cy="531.3" rx="23.700" ry="19" transform="rotate(-6 940.3 531.3)" fill="url(#gSpot)"/>
<ellipse cx="1027" cy="536" rx="30.400" ry="23" fill="none" stroke="#262626" stroke-width=".9" opacity=".7" stroke-dasharray="3 .8"/>
<use href="#pHead" class="rim" transform="translate(1.5 .5)"/></g>
<g clip-path="url(#cLegL)"><use href="#pLegL" fill="url(#lLegL)"/><use href="#pLegL" class="rim" transform="translate(1.5 .5)"/></g>
<g clip-path="url(#cBody)"><use href="#pBody" fill="url(#lBody)"/><path d="M917 748.5Q978 772 1039 739T1066 730" class="seam"/><use href="#pBody" class="rim" transform="translate(1.5 .5)"/></g>
<g clip-path="url(#cLegR)"><use href="#pLegR" fill="url(#lLegR)"/><use href="#pLegR" class="rim" transform="translate(1.5 .5)"/></g>
<g clip-path="url(#cArmR)"><use href="#pArmR" fill="url(#lArmR)"/><path d="M1090.4 792.3Q1111 771 1147 761" class="seam"/><use href="#pArmR" class="rim" transform="translate(1.5 .5)"/></g>
</g>
</svg>
<div id="printer"><span>Makerbot Replicator 2</span></div>
<svg width="110" height="110" viewBox="1810 40 110 110" style="position:absolute;left:1810px;top:40px">
<defs><linearGradient id="gCubeF" x1="0" y1="0" x2="0" y2="1"><stop offset="0" stop-color="#e2e2e2"/><stop offset="1" stop-color="#c2c2c2"/></linearGradient>
<linearGradient id="gCubeR" x1="0" y1="0" x2="0" y2="1"><stop offset="0" stop-color="#e6e6e6"/><stop offset="1" stop-color="#cbcbcb"/></linearGradient>
<linearGradient id="gDD" x1="0" y1="0" x2="0" y2="1"><stop offset="0" stop-color="#bdbdbd"/><stop offset=".35" stop-color="#fff"/><stop offset="1" stop-color="#e2e2e2"/></linearGradient></defs>
<path d="M1827.300 51.500l8.300 7h-2v6.300h-12.600v-6.300h-2z" fill="#dedede" stroke="#d2d2d2" stroke-width=".6"/><rect x="1825.700" y="59" width="3.300" height="5.800" fill="#c9c9c9"/>
<path d="M1899.600 52.400h13.100l-6.550 11z" fill="#8b8b8b"/>
<path d="M1833.300 72L1877 63.600L1877.600 114.900L1831.500 119.100Z" fill="url(#gCubeF)"/>
<path d="M1877 63.600L1895.900 78.200L1897.500 123.300L1877.600 114.900Z" fill="url(#gCubeR)"/>
<path d="M1831.500 119.100L1877.600 114.900L1897.500 123.300L1859.200 125.600Z" fill="#c6c6c6"/>
<path d="M1843.500 120.100L1872.900 117.500L1887 122.200L1859.200 124.900Z" fill="#a9c3dd" stroke="#1e78d8" stroke-width="1"/>
<path d="M1869.200 73.500L1881.800 72.200L1881.800 105.500L1869.200 105.500Z" fill="#a7aeb9"/>
<path d="M1833.300 72L1877 63.600L1895.900 78.200L1897.500 123.300L1859.200 125.600L1831.500 119.100ZM1877 63.600L1877.600 114.900L1831.500 119.100M1877.600 114.900L1897.500 123.300" fill="none" stroke="#6d6d6d" stroke-width=".8" stroke-dasharray="4 1.500"/>
<text transform="matrix(1 -.14 0 1 1841.500 101.800)" font-size="24" fill="#3b444f" font-family="'Liberation Sans','Noto Sans CJK JP','IPAGothic',sans-serif" font-weight="500">右</text>
<text transform="matrix(.5 .3 0 1.050 1881.800 100.500)" font-size="22" fill="#39414c" font-family="'Liberation Sans','Noto Sans CJK JP','IPAGothic',sans-serif" font-weight="500">後</text>
<path d="M1859 121.700h10M1864 119.700l3 4" stroke="#3b444f" stroke-width=".9"/>
<path d="M1898.300 130.500h12.800v4.800l-6.400 6l-6.400-6z" fill="url(#gDD)" stroke="#9d9d9d" stroke-width=".9"/><path d="M1898.300 134.200h12.800" stroke="#a9a9a9" stroke-width=".8"/>
</svg>
<div id="ob"><h4>オブジェクト ブラウザ</h4>
<div id="list">
<div class="row" style="top:0">左足</div>
<div class="row" style="top:20px">手</div>
<div class="row" style="top:40px">右耳1</div>
<div class="row" style="top:60px">右耳2</div>
<div class="row" style="top:80px">右耳3</div>
<div class="row" style="top:100px">左耳1</div>
<div class="row" style="top:120px">左耳2</div>
<div class="row" style="top:140px">左耳3</div>
<div class="row sel" style="top:160px">目</div>
<div class="row" style="top:180px">左目</div>
<div class="row en" style="top:200px">plane.obj</div>
<div class="row" style="top:220px"><span style="display:inline-block;transform:scaleX(.7);transform-origin:0 50%">しっぽ</span></div>
</div>
<div id="sb"></div>
<svg width="212" height="300" viewBox="1239 549 212 300" style="position:absolute;left:0;top:0">
<defs>
<g id="mag"><g transform="translate(1384.2 589.3) rotate(45)"><path d="M-4.600 -5.200V.2A4.600 4.600 0 0 0 4.600 .2V-5.200H1.900V.2A1.900 1.900 0 0 1 -1.900 .2V-5.200Z" fill="none" stroke="#6f6b68" stroke-width="1.150" stroke-linejoin="round"/><path d="M-4.600 -5.200h2.700v2.600h-2.700zM1.900 -5.200h2.700v2.600h-2.700z" fill="#6f6b68" stroke="#6f6b68" stroke-width="1"/></g></g>
<g id="eye" fill="none" stroke="#6f6b68"><path d="M1411.600 587c2.200-3 4.600-4.400 7.400-4.400s5.200 1.400 7.400 4.400c-2.200 3-4.600 4.400-7.400 4.400s-5.200-1.400-7.400-4.400z" stroke-width="1.200"/><circle cx="1419" cy="587" r="2.500" stroke-width="1.500"/></g>
</defs>
<use href="#mag" x="0" y="0"/><use href="#eye" x="0" y="0"/><use href="#mag" x="0" y="20"/><use href="#eye" x="0" y="20"/><use href="#mag" x="0" y="40"/><use href="#eye" x="0" y="40"/><use href="#mag" x="0" y="60"/><use href="#eye" x="0" y="60"/><use href="#mag" x="0" y="80"/><use href="#eye" x="0" y="80"/><use href="#mag" x="0" y="100"/><use href="#eye" x="0" y="100"/><use href="#mag" x="0" y="120"/><use href="#eye" x="0" y="120"/><use href="#mag" x="0" y="140"/><use href="#eye" x="0" y="140"/><use href="#mag" x="0" y="160"/><use href="#eye" x="0" y="160"/><use href="#mag" x="0" y="180"/><use href="#eye" x="0" y="180"/><use href="#mag" x="0" y="200"/><use href="#eye" x="0" y="200"/><use href="#mag" x="0" y="220"/><use href="#eye" x="0" y="220"/>
<circle cx="1435" cy="562" r="5" fill="#a9a5a1"/><path d="M1432.800 559.800l4.400 4.400M1437.200 559.800l-4.400 4.400" stroke="#837f7b" stroke-width="1.300"/>
<g fill="none" stroke="#625e5b" stroke-width="1.300" stroke-linejoin="round"><path d="M1256 829.500l6 2.500v7.500l-6 2.800l-6-2.800v-7.500zM1250 832l6 2.700l6-2.700M1256 834.700v7.600"/></g>
<g fill="none" stroke="#aaa6a2" stroke-width="1.200"><circle cx="1274.400" cy="836.500" r="5.300"/><path d="M1274.400 829.500v7h7"/><path d="M1278 840.500l1.800 2"/></g>
<g fill="none" stroke="#625e5b" stroke-width="1.200"><rect x="1392.500" y="829.500" width="8.500" height="8.500" rx="2.300"/><rect x="1396.800" y="834" width="8.500" height="8.500" rx="2.300"/></g>
<g fill="none" stroke="#625e5b" stroke-width="1.300"><path d="M1421.300 831.300h13.400M1425.500 831v-1.500h5v1.500"/><path d="M1423 832l.8 10.300h8.400l.8-10.300M1426.300 833.500v7M1429.700 833.500v7" stroke-width="1.200"/></g>
<path d="M1441 848l9.500-9.500M1445.500 848l5-5" stroke="#cfcbc7" stroke-width="1"/>
</svg>
</div>
<div id="status">頂点: 6302 三角形: 12600</div>
</body></html>
